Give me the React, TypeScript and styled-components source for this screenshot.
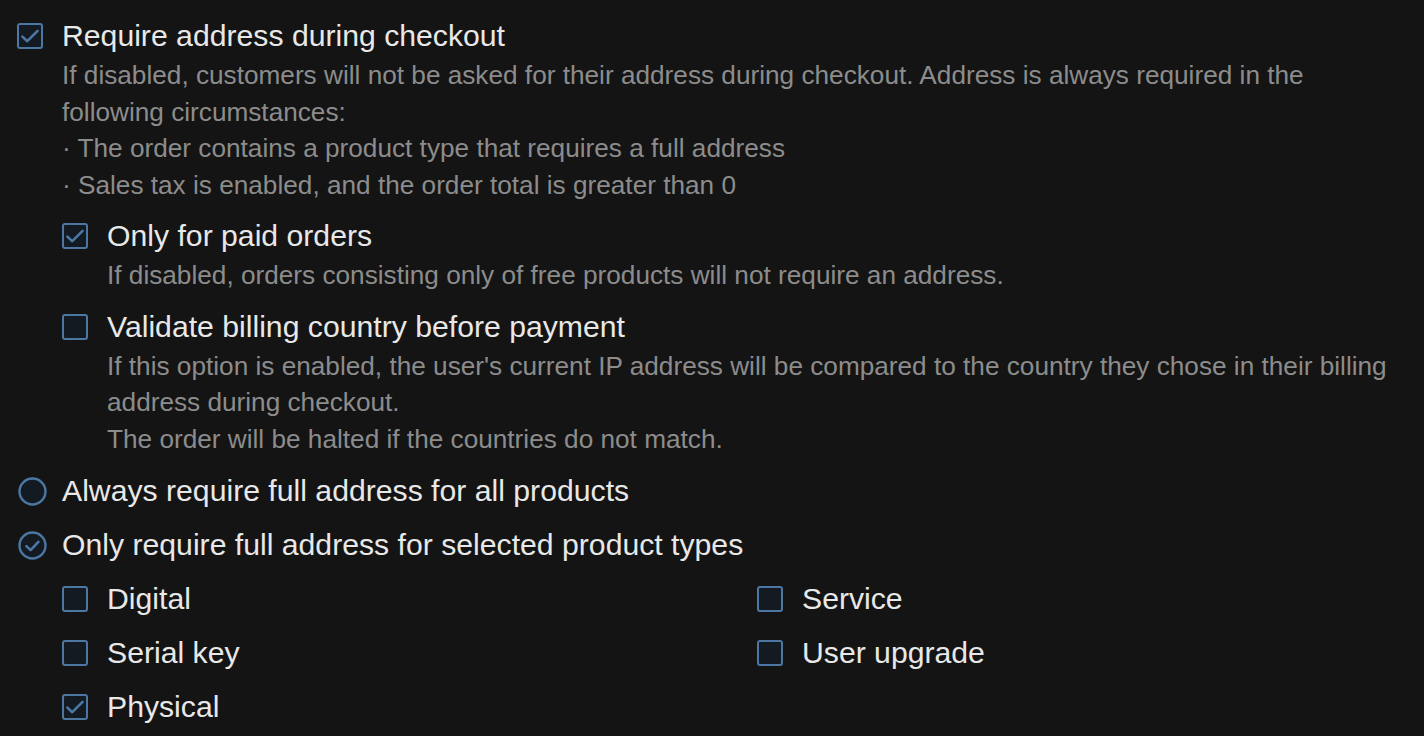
import type {FC, ReactNode} from 'react';
import styled, {createGlobalStyle} from 'styled-components';

const GlobalStyle = createGlobalStyle`
    html, body {
        margin: 0;
        background: #141414;
    }
    body {
        font-family: "Liberation Sans", Arial, sans-serif;
        -webkit-font-smoothing: antialiased;
    }
`;

const accent = '#4c77a3';

const CheckboxIcon: FC<{checked?: boolean}> = ({checked}) => <Box>
    {checked && <svg width="22" height="22" viewBox="0 0 22 22" aria-hidden="true">
        <path d="M3.4 11.6l4.9 4.6L18.6 5.8" fill="none" stroke={accent} strokeWidth="2.6" strokeLinecap="round" strokeLinejoin="round"/>
    </svg>}
</Box>;

const RadioIcon: FC<{checked?: boolean}> = ({checked}) => <RadioSvg width="29" height="29" viewBox="0 0 29 29" aria-hidden="true">
    <circle cx="14.5" cy="14.5" r="13" fill="#131a22" stroke={accent} strokeWidth="2.4"/>
    {checked && <path d="M8.4 15.1l4.2 4 7.8-8.3" fill="none" stroke={accent} strokeWidth="2.6" strokeLinecap="round" strokeLinejoin="round"/>}
</RadioSvg>;

type OptionProps = {
    kind?: 'checkbox' | 'radio';
    checked?: boolean;
    label: string;
    children?: ReactNode;
};

const Option: FC<OptionProps> = ({kind = 'checkbox', checked, label, children}) => <Row>
    <Control>
        {kind === 'radio' ? <RadioIcon checked={checked}/> : <CheckboxIcon checked={checked}/>}
    </Control>
    <Body>
        <Label>{label}</Label>
        {children}
    </Body>
</Row>;

const App: FC = () => <>
    <GlobalStyle/>
    <Page>
        <Option checked label="Require address during checkout">
            <Description>
                If disabled, customers will not be asked for their address during checkout. Address is always required in the following circumstances:
                <br/>· The order contains a product type that requires a full address
                <br/>· Sales tax is enabled, and the order total is greater than 0
            </Description>
            <Nested>
                <Option checked label="Only for paid orders">
                    <Description>If disabled, orders consisting only of free products will not require an address.</Description>
                </Option>
                <Option label="Validate billing country before payment">
                    <Description>
                        If this option is enabled, the user's current IP address will be compared to the country they chose in their billing address during checkout.
                        <br/>The order will be halted if the countries do not match.
                    </Description>
                </Option>
            </Nested>
        </Option>
        <Option kind="radio" label="Always require full address for all products"/>
        <Option kind="radio" checked label="Only require full address for selected product types">
            <TypeGrid>
                <Option label="Digital"/>
                <Option label="Service"/>
                <Option label="Serial key"/>
                <Option label="User upgrade"/>
                <Option checked label="Physical"/>
            </TypeGrid>
        </Option>
    </Page>
</>;

export default App;

const Page = styled.div`
    display: flex;
    flex-direction: column;
    row-gap: 14px;
    padding: 16px 16px 0 17px;
`;

const Row = styled.div`
    display: grid;
    grid-template-columns: 26px 1fr;
    column-gap: 19px;
    align-items: start;
`;

const Control = styled.div`
    height: 40px;
    display: flex;
    align-items: center;
`;

const Box = styled.span`
    box-sizing: border-box;
    inline-size: 26px;
    block-size: 26px;
    display: grid;
    place-items: center;
    border: 2px solid ${accent};
    border-radius: 3px;
    background: #131a22;
`;

const RadioSvg = styled.svg`
    flex: none;
    margin-inline-start: 1px;
`;

const Body = styled.div`
    display: flex;
    flex-direction: column;
    min-inline-size: 0;
`;

const Label = styled.div`
    font-size: 30.2px;
    line-height: 40px;
    color: #e8e8e8;
`;

const Description = styled.div`
    margin-top: 1px;
    font-size: 26.2px;
    line-height: 36.5px;
    color: #8c8c8c;
`;

const Nested = styled.div`
    display: flex;
    flex-direction: column;
    row-gap: 13px;
    margin-top: 13px;
`;

const TypeGrid = styled.div`
    display: grid;
    grid-template-columns: 695px 1fr;
    row-gap: 14px;
    margin-top: 14px;
`;
